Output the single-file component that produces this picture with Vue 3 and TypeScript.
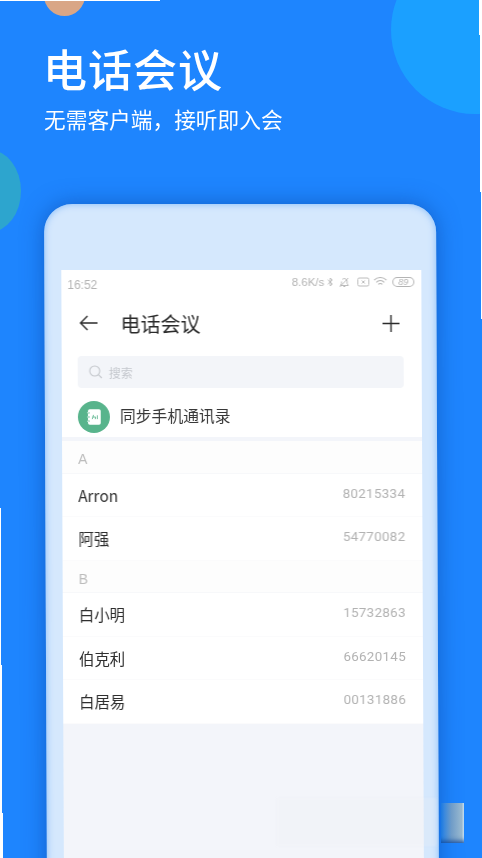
<script setup lang="ts">
interface Contact { name: string; num: string }
interface Group { letter: string; items: Contact[] }
const groups: Group[] = [
  { letter: 'A', items: [{ name: 'Arron', num: '80215334' }, { name: '阿强', num: '54770082' }] },
  { letter: 'B', items: [{ name: '白小明', num: '15732863' }, { name: '伯克利', num: '66620145' }, { name: '白居易', num: '00131886' }] },
]
</script>

<template>
  <div class="page">
    <div class="dot dot-peach"></div>
    <div class="dot dot-sky"></div>
    <div class="dot dot-teal"></div>
    <header class="hero">
      <h1>电话会议</h1>
      <p>无需客户端，接听即入会</p>
    </header>
    <div class="phone">
      <div class="screen">
        <div class="head">
          <div class="status">
            <span class="time">16:52</span>
            <div class="status-right">
              <span class="speed">8.6K/s</span>
              <svg width="6" height="10" viewBox="0 0 6 10" fill="none" stroke="#b4b4b4" stroke-width=".9"><path d="M.5 2.800 5 7 3 9V1l2 2L.5 7.200"/></svg>
              <svg class="bell" width="12" height="11" viewBox="0 0 12 11" fill="none" stroke="#b4b4b4" stroke-width=".9"><path d="M2 8.500h8L8.800 6.500V4.200A2.800 2.800 0 0 0 4 2.400M3.200 4.500v2L2 8.500M5 9.500h2M1.500 10 10 1"/></svg>
              <svg class="sim" width="12" height="10" viewBox="0 0 12 10" fill="none" stroke="#b4b4b4" stroke-width=".9"><rect x=".5" y="1" width="11" height="8" rx="1.500"/><path d="m4.500 3.500 3 3m0-3-3 3"/></svg>
              <svg class="wifi" width="14" height="10" viewBox="0 0 14 10" fill="none" stroke="#b4b4b4" stroke-width="1"><path d="M.8 3.200a8.600 8.600 0 0 1 12.400 0M3 5.300a5.500 5.500 0 0 1 8 0M5 7.400a2.600 2.600 0 0 1 4 0"/></svg>
              <span class="battery">89</span>
            </div>
          </div>
          <div class="nav">
            <svg width="20" height="16" viewBox="0 0 20 16" fill="none" stroke="#2b2b2b" stroke-width="1.400"><path d="M19 8H2M9 1 2 8l7 7"/></svg>
            <span class="nav-title">电话会议</span>
            <svg class="plus" width="17" height="17" viewBox="0 0 17 17" fill="none" stroke="#2b2b2b" stroke-width="1.400"><path d="M8.500 0v17M0 8.500h17"/></svg>
          </div>
          <div class="search">
            <svg width="14" height="14" viewBox="0 0 14 14" fill="none" stroke="#c4c7cc" stroke-width="1.100"><circle cx="6" cy="6" r="5"/><path d="m9.600 9.600 3.400 3.400"/></svg>
            <span>搜索</span>
          </div>
          <div class="sync">
            <div class="sync-icon">
              <svg width="18" height="20" viewBox="0 0 18 20"><rect x="2" y="1" width="15" height="18" rx="2" fill="#fff"/><path d="M0 5h4M0 10h4M0 15h4" stroke="#58b48c" stroke-width="1.500"/><path d="M1 5h3M1 10h3M1 15h3" stroke="#fff" stroke-width="1"/><path d="M7 12.500c.500-2 1-3 1.500-5m-1 2.500h3.500l-.5 2.500M13 8v4.500" fill="none" stroke="#58b48c" stroke-width="1"/></svg>
            </div>
            <span class="sync-label">同步手机通讯录</span>
          </div>
        </div>
        <div class="list">
          <section v-for="g in groups" :key="g.letter">
            <div class="letter">{{ g.letter }}</div>
            <div v-for="c in g.items" :key="c.num" class="row">
              <span class="name">{{ c.name }}</span>
              <span class="num">{{ c.num }}</span>
            </div>
          </section>
        </div>
      </div>
    </div>
    <div class="ghost"></div>
    <div class="tab"></div>
    <div class="edge edge-top"></div>
    <div class="edge edge-r1"></div>
    <div class="edge edge-r2"></div>
    <div class="edge edge-r3"></div>
    <div class="edge edge-l1"></div>
    <div class="edge edge-l2"></div>
    <div class="edge edge-l3"></div>
  </div>
</template>

<style>
html, body { margin: 0; padding: 0; background: #fff; }
</style>

<style scoped>
.page {
  position: relative;
  box-sizing: border-box;
  width: 482px;
  height: 858px;
  overflow: hidden;
  background: #1e85fe;
  display: flex;
  flex-direction: column;
  font-family: "Noto Sans CJK SC", "Liberation Sans", sans-serif;
}
.dot { position: absolute; border-radius: 50%; }
.dot-peach { left: 44px; top: -25px; width: 41px; height: 41px; background: #d9a686; }
.dot-sky { left: 391px; top: -54px; width: 168px; height: 168px; background: #1ba0ff; }
.dot-teal { left: -42px; top: 150px; width: 63px; height: 82px; background: #2da5ce; }

.hero { position: relative; padding: 40px 0 0 43px; color: #fff; height: 160px; box-sizing: border-box; flex: none; }
.hero h1 { margin: 0; font-size: 44px; line-height: 56px; font-weight: 500; letter-spacing: 1px; filter: blur(.3px); }
.hero p { margin: 8px 0 0 1px; font-size: 21.700px; line-height: 30px; filter: blur(.3px); }

.phone {
  position: relative;
  flex: none;
  height: 700px;
  margin: 44px 46px 0 44px;
  padding: 66px 15px 0 17px;
  box-sizing: border-box;
  background: #d5e8fd;
  border-radius: 28px 28px 0 0;
  box-shadow: 0 0 22px rgba(8, 60, 150, .5), inset 0 0 7px rgba(110, 175, 250, .8);
  transform: skewX(.25deg);
  transform-origin: 0 0;
  display: flex;
  flex-direction: column;
}
.screen { flex: 1; display: flex; flex-direction: column; background: #f3f5fa; min-height: 0; filter: blur(.35px); }
.head { flex: none; background: #fff; }
.status { height: 28px; display: flex; align-items: center; justify-content: space-between; padding: 0 7px 0 6px; color: #b4b4b4; font-family: "Liberation Sans", sans-serif; font-size: 11px; }
.time { font-size: 12px; padding-top: 2px; }
.status-right { display: flex; align-items: center; gap: 3px; margin-top: -4px; }
.speed { font-size: 11.500px; }
.bell { margin-left: 2px; }
.sim { margin-left: 4px; }
.wifi { margin-left: 1px; }
.battery { box-sizing: border-box; width: 22px; height: 10px; text-align: center; border: 1px solid #b4b4b4; border-radius: 6px; font-size: 9px; line-height: 8px; margin-left: 2px; font-style: italic; }
.nav { height: 58px; box-sizing: border-box; display: flex; align-items: center; padding: 0 22px 8px 17px; color: #2b2b2b; }
.nav-title { margin-left: 22px; font-size: 20px; }
.plus { margin-left: auto; }
.search {
  height: 32px;
  margin: 0 18px 0 16px;
  border-radius: 4px;
  display: flex;
  align-items: center;
  gap: 6px;
  padding-left: 11px;
  background: #f3f5f9;
  color: #c5c8ce;
  font-size: 12px;
}
.sync { height: 53px; box-sizing: border-box; display: flex; align-items: center; gap: 10px; padding: 9px 0 0 16px; color: #383838; font-size: 15.800px; border-bottom: 4px solid #f3f5fa; }
.sync-label { margin-top: -3px; }
.sync-icon { width: 32px; height: 32px; border-radius: 50%; background: #58b48c; display: flex; align-items: center; justify-content: center; }
.sync-icon svg { transform: scale(.85); }

.list { flex: none; }
.letter { height: 32.500px; line-height: 36px; box-sizing: border-box; padding-left: 16px; background: #fdfdfd; color: #bcbcbc; font-family: "Liberation Sans", sans-serif; font-size: 14px; border-bottom: 1px solid #f7f8fa; }
.row { height: 43.500px; background: #fff; display: flex; align-items: center; justify-content: space-between; padding: 0 17px 0 16px; box-sizing: border-box; border-bottom: 1px solid #fbfbfc; }
.name { color: #2e2e2e; font-size: 15.400px; }
.num { color: #b2b2b2; font-family: "Roboto", sans-serif; font-size: 13.400px; letter-spacing: .3px; margin-bottom: 3px; }

.ghost { position: absolute; left: 277px; top: 798px; width: 160px; height: 48px; background: rgba(238, 238, 240, .22); filter: blur(1px); }
.tab {
  position: absolute;
  left: 441px;
  top: 803px;
  width: 23px;
  height: 40px;
  background: linear-gradient(90deg, #1f7fe8, #6f9cc8 45%, #9ab9cf 90%, #d9eef9);
  box-shadow: inset 0 -5px 5px -3px rgba(15, 70, 150, .9);
  filter: blur(.4px);
}
.edge { position: absolute; background: #fff; }
.edge-top { left: 0; top: 0; width: 160px; height: 1px; }
.edge-r1 { right: 0; top: 0; width: 3px; height: 35px; }
.edge-r2 { right: 0; top: 35px; width: 2px; height: 157px; }
.edge-r3 { right: 0; top: 192px; width: 1px; height: 127px; }
.edge-l1 { left: 0; top: 508px; width: 1px; height: 157px; }
.edge-l2 { left: 0; top: 665px; width: 2px; height: 148px; }
.edge-l3 { left: 0; top: 813px; width: 3px; height: 45px; }
</style>
